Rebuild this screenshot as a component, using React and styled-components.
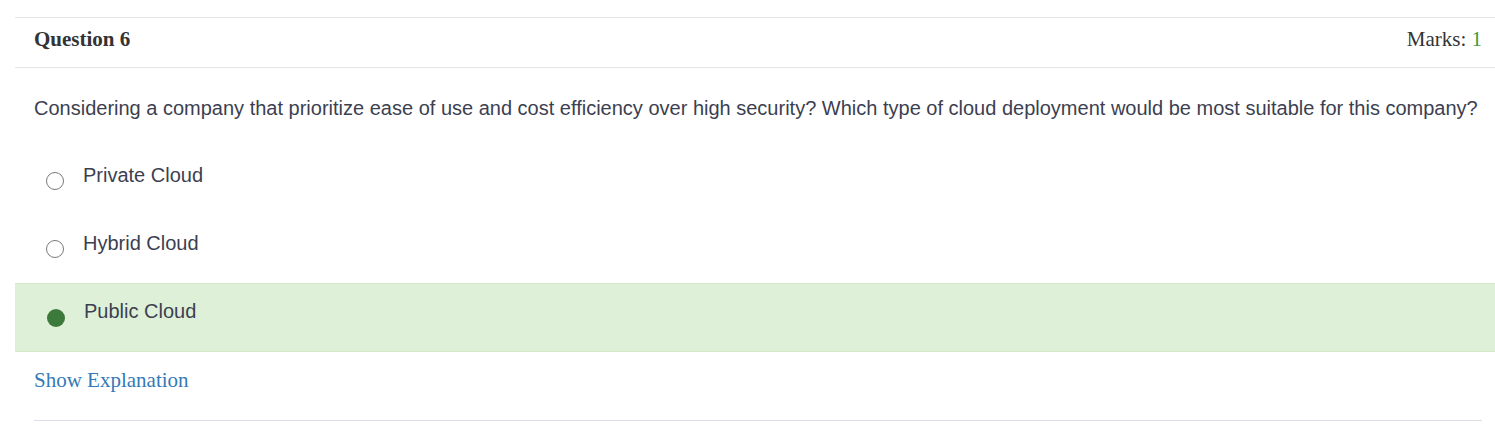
import styled, { createGlobalStyle } from "styled-components";

const GlobalStyle = createGlobalStyle`
  body {
    margin: 0;
    background: #fff;
  }
`;

const Page = styled.div`
  padding: 17px 0 0 15px;
`;

const Panel = styled.div`
  border-top: 1px solid #e6e6e6;
`;

const Header = styled.div`
  display: flex;
  justify-content: space-between;
  align-items: center;
  height: 50px;
  box-sizing: border-box;
  padding: 0 13px 6px 19px;
  border-bottom: 1px solid #e6e6e6;
  font-family: "Liberation Serif", "Times New Roman", serif;
  font-size: 21px;
  color: #333;
`;

const Title = styled.div`
  font-weight: bold;
`;

const Marks = styled.div`
  color: #333;
`;

const Score = styled.span`
  color: #3c9a3c;
`;

const Question = styled.p`
  margin: 0;
  padding: 26px 13px 25px 19px;
  font-family: "Liberation Sans", Arial, sans-serif;
  font-size: 20px;
  line-height: 28px;
  color: #3c3f50;
`;

const Option = styled.label`
  display: flex;
  align-items: center;
  height: ${(p) => (p.$selected ? "69px" : "68px")};
  box-sizing: border-box;
  padding-left: ${(p) => (p.$selected ? "32px" : "31px")};
  background: ${(p) => (p.$selected ? "#dff0d8" : "transparent")};
  border-top: 1px solid ${(p) => (p.$selected ? "#d6e9c6" : "transparent")};
  border-bottom: 1px solid ${(p) => (p.$selected ? "#d6e9c6" : "transparent")};
  font-family: "Liberation Sans", Arial, sans-serif;
  font-size: 20px;
  color: #3c3f50;
`;

const Radio = styled.span`
  flex: none;
  width: 18px;
  height: 18px;
  box-sizing: border-box;
  border-radius: 50%;
  border: ${(p) => (p.$checked ? "none" : "1.5px solid #7a7a7a")};
  background: ${(p) => (p.$checked ? "#3b7a3b" : "#fff")};
`;

const OptionText = styled.span`
  margin-left: 19px;
  padding-bottom: 12px;
`;

const Footer = styled.div`
  margin: 0 13px 0 19px;
  padding: 16px 0 0;
  height: 69px;
  box-sizing: border-box;
  border-bottom: 1px solid #dedee6;
`;

const ExplainLink = styled.a`
  font-family: "Liberation Serif", "Times New Roman", serif;
  font-size: 21px;
  line-height: 24px;
  color: #337ab7;
  text-decoration: none;
  cursor: pointer;
`;

const options = [
  { label: "Private Cloud", selected: false },
  { label: "Hybrid Cloud", selected: false },
  { label: "Public Cloud", selected: true },
];

export default function App() {
  return (
    <Page>
      <GlobalStyle />
      <Panel>
        <Header>
          <Title>Question 6</Title>
          <Marks>
            Marks: <Score>1</Score>
          </Marks>
        </Header>
        <Question>
          Considering a company that prioritize ease of use and cost efficiency
          over high security? Which type of cloud deployment would be most
          suitable for this company?
        </Question>
        {options.map((o) => (
          <Option key={o.label} $selected={o.selected}>
            <Radio $checked={o.selected} />
            <OptionText>{o.label}</OptionText>
          </Option>
        ))}
        <Footer>
          <ExplainLink>Show Explanation</ExplainLink>
        </Footer>
      </Panel>
    </Page>
  );
}
